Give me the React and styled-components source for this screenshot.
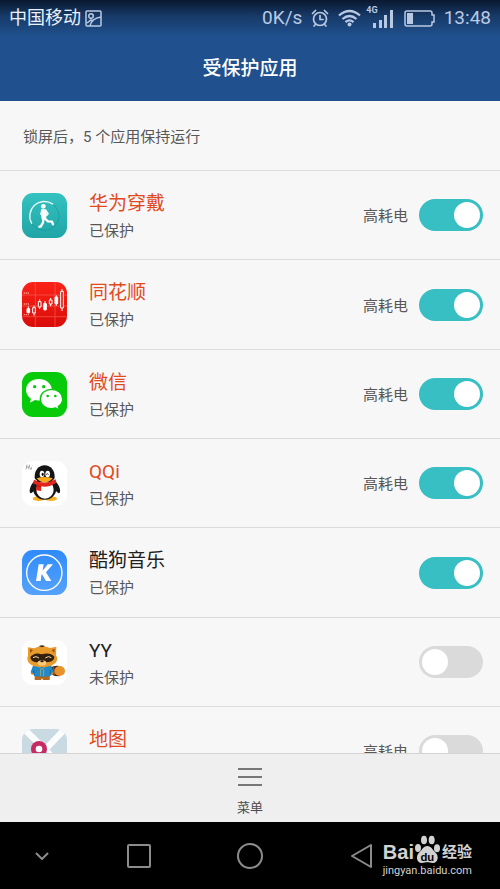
import React, { useState } from "react";
import styled, { createGlobalStyle } from "styled-components";

const GlobalStyle = createGlobalStyle`
  *, *::before { box-sizing: border-box; }
  body {
    margin: 0;
    background: #000;
    font-family: Roboto, "Noto Sans CJK SC", sans-serif;
  }
  button { font: inherit; border: 0; padding: 0; background: none; cursor: pointer; }
`;

const Screen = styled.div`
  display: flex;
  flex-direction: column;
  height: 100vh;
  background: #f7f7f7;
  overflow: hidden;
`;

const Header = styled.header`
  flex: none;
  color: #fff;
  background: linear-gradient(#0a1830 0, #173a68 16px, #20508d 36px);
`;

const StatusBar = styled.div`
  display: flex;
  align-items: center;
  height: 36px;
  padding: 0 9px;
  color: #b9c9e2;
  font-size: 19px;
  line-height: 36px;
  svg { display: block; flex: none; }
`;

const Carrier = styled.span`
  flex: 1;
  display: flex;
  align-items: center;
  gap: 4px;
  color: #e9f1fc;
  font-size: 18px;
`;

const StatusIcons = styled.span`
  display: flex;
  align-items: center;
  gap: 9px;
`;

const Title = styled.h1`
  margin: 0;
  height: 65px;
  font-size: 19px;
  font-weight: 500;
  line-height: 66px;
  text-align: center;
`;

const Content = styled.main`
  flex: 1;
  min-height: 0;
  overflow-y: auto;
  scrollbar-width: none;
`;

const Summary = styled.p`
  margin: 0;
  padding: 0 23px;
  height: 69px;
  color: #585858;
  font-size: 15px;
  line-height: 72px;
`;

const AppList = styled.ul`
  margin: 0;
  padding: 0;
  list-style: none;
`;

const AppRow = styled.li`
  display: flex;
  align-items: center;
  height: 89px;
  padding: 0 17px 0 22px;
  border-top: 1px solid #dcdcdc;
  &:nth-child(3n + 2) { height: 90px; }
`;

const AppIcon = styled.svg`
  flex: none;
  width: 45px;
  height: 45px;
  border-radius: 11px;
`;

const AppText = styled.label`
  flex: 1;
  margin-left: 22px;
  padding-top: 3px;
`;

const AppName = styled.span`
  display: block;
  color: ${(p) => (p.$alert ? "#e24a1e" : "#202020")};
  font-size: 19px;
  line-height: 28px;
`;

const AppState = styled.span`
  display: block;
  color: #585858;
  font-size: 15px;
  line-height: 26px;
`;

const PowerTag = styled.span`
  margin-right: 11px;
  padding-top: 2px;
  color: #585858;
  font-size: 15px;
  line-height: 26px;
`;

const Switch = styled.input`
  appearance: none;
  flex: none;
  display: flex;
  justify-content: ${(p) => (p.checked ? "flex-end" : "flex-start")};
  width: 64px;
  height: 32px;
  margin: 0;
  padding: 3px;
  border-radius: 16px;
  background: ${(p) => (p.checked ? "#37bfc3" : "#dadada")};
  cursor: pointer;
  &::before {
    content: "";
    width: 26px;
    height: 26px;
    border-radius: 50%;
    background: #fff;
  }
`;

const Toolbar = styled.footer`
  flex: none;
  display: flex;
  justify-content: center;
  height: 69px;
  border-top: 1px solid #d4d4d4;
  background: #efefef;
`;

const MenuButton = styled.button`
  display: flex;
  flex-direction: column;
  align-items: center;
  padding-top: 13px;
  color: #4c4c4c;
  font-size: 13px;
  line-height: 20px;
  svg { display: block; margin-bottom: 11px; }
`;

const NavBar = styled.nav`
  flex: none;
  position: relative;
  display: grid;
  grid-template-columns: 83px 1fr 1fr 1fr 83px;
  align-items: center;
  justify-items: center;
  height: 67px;
  background: #000;
  svg { display: block; }
`;

const Watermark = styled.div`
  position: absolute;
  right: 28px;
  bottom: 10px;
  display: flex;
  flex-direction: column;
  align-items: flex-end;
  color: #d2d2d2;
  font-family: "Liberation Sans", "Noto Sans CJK SC", sans-serif;
`;

const Brand = styled.div`
  display: flex;
  align-items: flex-end;
  height: 28px;
  font-size: 20px;
  font-weight: 700;
  line-height: 22px;
`;

const BrandSuffix = styled.span`
  margin-left: 1px;
  font-size: 15px;
  line-height: 22px;
`;

const Site = styled.div`
  font-family: Roboto, sans-serif;
  font-size: 11px;
  line-height: 16px;
`;

const RunnerIcon = () => (
  <AppIcon viewBox="66 37 135 135" aria-hidden="true">
    <defs>
      <linearGradient id="teal" x2="0" y2="1">
        <stop stopColor="#34c2c1" />
        <stop offset="1" stopColor="#20a5a6" />
      </linearGradient>
      <linearGradient id="ring" x2="1" y2="0.6">
        <stop stopColor="#d8f6f4" />
        <stop offset="1" stopColor="#fff" />
      </linearGradient>
    </defs>
    <rect x="66" y="37" width="135" height="135" fill="url(#teal)" />
    <circle cx="133" cy="106" r="44" fill="none" stroke="#168f91" strokeWidth="3" opacity="0.5" />
    <path d="M95 128A44 44 0 0 1 158 70" fill="none" stroke="url(#ring)" strokeWidth="4" strokeLinecap="round" />
    <circle cx="130" cy="77" r="7" fill="#fff" />
    <path d="M124 86h13l3 12-2 18H125l-2-15z" fill="#fff" />
    <g fill="none" stroke="#fff" strokeLinecap="round" strokeLinejoin="round">
      <path d="M126 88l-3 12 8 6M137 89l7 10-4 5" strokeWidth="5" />
      <path d="M134 113l10 9 12 1 3 8M130 114l-1 12-7 12h-4" strokeWidth="7" />
    </g>
  </AppIcon>
);

const CandleIcon = () => (
  <AppIcon viewBox="66 305 135 135" aria-hidden="true">
    <defs>
      <linearGradient id="red" x2="0" y2="1">
        <stop stopColor="#fb2418" />
        <stop offset="1" stopColor="#d90d0b" />
      </linearGradient>
    </defs>
    <rect x="66" y="305" width="135" height="135" fill="url(#red)" />
    <path d="M66 344H201M66 409H201M106 305V440M165 305V440M66 377H201" stroke="#ff7466" strokeWidth="2" opacity="0.75" />
    <path d="M71 338h17M71 371h17M71 403h17" stroke="#ff9487" strokeWidth="4" strokeDasharray="4 2" />
    <g stroke="#fff" strokeWidth="3">
      <path d="M85 378V399M102 376V406M119 357V386M135 362V391M152 353V378M169 345V376M186 326V392" />
      <path d="M81 385h8v12h-8zM131 370h8v18h-8zM165 350h8v20h-8z" fill="#fff" />
      <path d="M98 382h8v16h-8zM115 364h8v16h-8zM148 359h8v12h-8zM182 333h8v50h-8z" fill="#e01a12" />
    </g>
  </AppIcon>
);

const WeChatIcon = () => (
  <AppIcon viewBox="66 33 135 135" aria-hidden="true">
    <rect x="66" y="33" width="135" height="135" fill="#07ca0b" />
    <path d="M117 54c-22 0-39 14-39 33 0 11 6 20 15 26l-3 12 15-8c41 8 52-15 51-30-1-19-18-33-39-33z" fill="#fff" />
    <path d="M155 85c-19 0-34 12-34 29s15 29 34 29c4 0 8-1 12-2l11 6-3-11c8-5 13-13 13-22 0-17-15-29-33-29z" fill="#fff" stroke="#07ca0b" strokeWidth="4" />
    <g fill="#07ca0b">
      <circle cx="104" cy="77" r="5" />
      <circle cx="131" cy="77" r="5" />
      <circle cx="143" cy="105" r="4" />
      <circle cx="166" cy="105" r="4" />
    </g>
  </AppIcon>
);

const PenguinIcon = () => (
  <AppIcon viewBox="66 302 135 135" aria-hidden="true">
    <rect x="66" y="302" width="135" height="135" fill="#fff" />
    <path d="M81 313l-3 14M89 313l-3 14M79 320h9M94 320l-2 7 4-2M97 315v1" fill="none" stroke="#777" strokeWidth="2" />
    <ellipse cx="116" cy="415" rx="18" ry="7" fill="#f3ae23" />
    <ellipse cx="153" cy="415" rx="18" ry="7" fill="#f3ae23" />
    <path d="M106 359C87 377 86 399 93 399q5-2 10-10zM162 359c21 18 22 40 14 40q-5-2-10-10z" fill="#151515" />
    <ellipse cx="134" cy="385" rx="35" ry="33" fill="#151515" />
    <ellipse cx="135" cy="388" rx="26" ry="27" fill="#fff" />
    <path d="M104 352c-1-22 12-37 30-37s31 15 30 37c-2 17-58 17-60 0z" fill="#151515" />
    <ellipse cx="126" cy="341" rx="7" ry="10" fill="#fff" />
    <ellipse cx="143" cy="341" rx="7" ry="10" fill="#fff" />
    <ellipse cx="128" cy="342" rx="3" ry="5" />
    <path d="M139 343q3-6 6 0" fill="none" stroke="#111" strokeWidth="3" />
    <path d="M102 358q31 18 65-1l2 10q-24 16-45 11l-1 14-15-2 2-16-11-5z" fill="#e2241b" />
    <path d="M110 354q24-8 48 0-9 12-24 12t-24-12z" fill="#f5a91b" />
    <path d="M111 376l12 3" stroke="#9e120e" strokeWidth="2" />
  </AppIcon>
);

const KugouIcon = () => (
  <AppIcon viewBox="66 29 135 135" aria-hidden="true">
    <defs>
      <linearGradient id="sky" x2="0" y2="1">
        <stop stopColor="#2f8bfa" />
        <stop offset="1" stopColor="#55a2fb" />
      </linearGradient>
    </defs>
    <rect x="66" y="29" width="135" height="135" fill="url(#sky)" />
    <circle cx="133" cy="97" r="53" fill="none" stroke="#fff" strokeWidth="4" />
    <path d="M116 72h15l-3 19 15-19h16l-21 24 16 26h-16l-13-22-3 22h-14z" fill="#fff" />
  </AppIcon>
);

const RaccoonIcon = () => (
  <AppIcon viewBox="66 298 135 135" aria-hidden="true">
    <rect x="66" y="298" width="135" height="135" fill="#fff" />
    <path d="M149 382q12-8 26-7l4 32q-17 0-29-8z" fill="#3b2414" />
    <path d="M161 379l2 24" stroke="#a86a24" strokeWidth="3" />
    <ellipse cx="179" cy="391" rx="16" ry="15" fill="#e8922b" />
    <path d="M104 399h46l-1 19h-20l-3-5-3 5h-19z" fill="#b46a1e" />
    <circle cx="97" cy="397" r="5" fill="#d98a2b" />
    <circle cx="156" cy="397" r="5" fill="#d98a2b" />
    <path d="M100 372h53l8 22-9 5v7q-26 5-50 0v-7l-10-5z" fill="#2288c6" />
    <path d="M102 388v16M151 388v16" stroke="#125885" strokeWidth="2" />
    <path d="M114 376l12 10 12-10M122 386v20M131 386v20" fill="none" stroke="#d9b350" strokeWidth="2" />
    <path d="M84 320l18 3q26-12 48-1l19-4-1 26q8 12-1 22-16 14-41 13-27 1-39-12-8-12-3-22z" fill="#e99b2c" />
    <path d="M90 325l9 3-8 9zM164 324l-9 4 8 9z" fill="#8f5118" />
    <path d="M116 317q10-7 19 0-8 5-19 0z" fill="#4a2b15" />
    <path d="M91 349q13-16 34-8 25-8 38 7 0 13-17 16-20 3-22-6-6 9-20 6-12-3-13-15z" fill="#33200f" />
    <path d="M99 351q9-7 18 1M136 352q9-8 18-1" fill="none" stroke="#f7ddb0" strokeWidth="3" />
    <ellipse cx="126" cy="367" rx="13" ry="8" fill="#f8ca78" />
    <ellipse cx="126" cy="362" rx="5" ry="3" fill="#271409" />
  </AppIcon>
);

const MapIcon = () => (
  <AppIcon viewBox="66 564 135 135" aria-hidden="true">
    <rect x="66" y="564" width="135" height="135" fill="#c9dae2" />
    <path d="M68 560L140 630 L201 699M198 560L66 699" fill="none" stroke="#fbfcfc" strokeWidth="19" />
    <path d="M117 600a24 24 0 0 1 24 24c0 18-24 42-24 42s-24-24-24-42a24 24 0 0 1 24-24z" fill="#c62b63" />
    <circle cx="117" cy="624" r="10" fill="#fff" />
  </AppIcon>
);

const apps = [
  { id: "wear", name: "华为穿戴", Icon: RunnerIcon, alert: true, power: true, on: true },
  { id: "ths", name: "同花顺", Icon: CandleIcon, alert: true, power: true, on: true },
  { id: "wechat", name: "微信", Icon: WeChatIcon, alert: true, power: true, on: true },
  { id: "qqi", name: "QQi", Icon: PenguinIcon, alert: true, power: true, on: true },
  { id: "kugou", name: "酷狗音乐", Icon: KugouIcon, alert: false, power: false, on: true },
  { id: "yy", name: "YY", Icon: RaccoonIcon, alert: false, power: false, on: false },
  { id: "map", name: "地图", Icon: MapIcon, alert: true, power: true, on: false },
];

const PictureGlyph = () => (
  <svg width="17" height="17" viewBox="0 0 17 17" fill="none" stroke="#b9c9e2" strokeWidth="1.5" aria-hidden="true">
    <rect x="1" y="1" width="15" height="15" rx="1" />
    <circle cx="6" cy="6" r="2.3" />
    <path d="M2 13l4-3 2 1M5 16c1-6 5-8 11-9" />
  </svg>
);

const AlarmGlyph = () => (
  <svg width="18" height="18" viewBox="0 0 18 18" fill="none" stroke="#b9c9e2" strokeWidth="1.7" strokeLinecap="round" aria-hidden="true">
    <circle cx="9" cy="10" r="6.5" />
    <path d="M9 6.5V10.5H12M1.5 4.5L4.5 1.5M16.5 4.5L13.5 1.5M4.5 15.5L3 17M13.5 15.5L15 17" />
  </svg>
);

const WifiGlyph = () => (
  <svg width="23" height="18" viewBox="0 0 23 18" fill="none" stroke="#b9c9e2" strokeWidth="2.3" aria-hidden="true">
    <path d="M1 6.5Q11.5-2.5 22 6.5M4.500 10Q11.500 4 18.500 10M7.500 13.200Q11.500 9.600 15.500 13.200" />
    <circle cx="11.5" cy="15.5" r="2" fill="#b9c9e2" stroke="none" />
  </svg>
);

const Signal = styled.span`
  display: flex;
  align-items: flex-start;
  height: 24px;
  margin: 0 2px 0 -4px;
  font-size: 9px;
  font-weight: 700;
  line-height: 9px;
  svg { margin: 4px 0 0 -5px; }
`;

const SignalGlyph = () => (
  <svg width="20" height="18" viewBox="0 0 20 18" fill="#b9c9e2" aria-hidden="true">
    <path d="M0 13h3v5H0zM6 10h3v8H6zM11 5h3v13h-3zM17 0h3v18h-3z" />
  </svg>
);

const BatteryGlyph = () => (
  <svg width="31" height="17" viewBox="0 0 31 17" fill="none" stroke="#b9c9e2" strokeWidth="1.5" aria-hidden="true">
    <path d="M3 1H26Q28 1 28 3V5H30V12H28V14Q28 16 26 16H3Q1 16 1 14V3Q1 1 3 1Z" />
    <path d="M3 3h6v11H3z" fill="#b9c9e2" stroke="none" />
  </svg>
);

const PawGlyph = () => (
  <svg width="27" height="28" viewBox="222 46 81 84" fill="#d2d2d2" aria-hidden="true">
    <ellipse cx="234" cy="85" rx="9" ry="12" />
    <ellipse cx="252" cy="61" rx="9" ry="13" />
    <ellipse cx="275" cy="61" rx="9" ry="13" />
    <ellipse cx="291" cy="86" rx="9" ry="12" />
    <path d="M262 79c13 0 15 12 25 20 10 9 8 30-8 31-8 0-11-2-17-2s-9 2-17 2c-16-1-18-22-8-31 10-8 12-20 25-20z" />
    <text x="262" y="123" textAnchor="middle" fontSize="34" fontWeight="700" fill="#000">du</text>
  </svg>
);

export default function App() {
  const [enabled, setEnabled] = useState(() => Object.fromEntries(apps.map((a) => [a.id, a.on])));
  const toggle = (id) => setEnabled((s) => ({ ...s, [id]: !s[id] }));
  const count = Object.values(enabled).filter(Boolean).length;

  return (
    <>
      <GlobalStyle />
      <Screen>
        <Header>
          <StatusBar>
            <Carrier>中国移动<PictureGlyph /></Carrier>
            <StatusIcons>
              <span>0K/s</span>
              <AlarmGlyph />
              <WifiGlyph />
              <Signal>4G<SignalGlyph /></Signal>
              <BatteryGlyph />
              <span>13:48</span>
            </StatusIcons>
          </StatusBar>
          <Title>受保护应用</Title>
        </Header>
        <Content>
          <Summary>锁屏后，{count} 个应用保持运行</Summary>
          <AppList>
            {apps.map(({ id, name, Icon, alert, power }) => (
              <AppRow key={id}>
                <Icon />
                <AppText htmlFor={id}>
                  <AppName $alert={alert}>{name}</AppName>
                  <AppState>{enabled[id] ? "已保护" : "未保护"}</AppState>
                </AppText>
                {power && <PowerTag>高耗电</PowerTag>}
                <Switch id={id} type="checkbox" checked={enabled[id]} onChange={() => toggle(id)} />
              </AppRow>
            ))}
          </AppList>
        </Content>
        <Toolbar>
          <MenuButton type="button">
            <svg width="24" height="20" viewBox="0 0 24 20" stroke="#777" strokeWidth="2" aria-hidden="true">
              <path d="M0 2H24M0 10H24M0 18H24" />
            </svg>
            菜单
          </MenuButton>
        </Toolbar>
        <NavBar>
          <button type="button" aria-label="收起">
            <svg width="14" height="8" viewBox="0 0 14 8" fill="none" stroke="#8c8c8c" strokeWidth="2">
              <path d="M1 1l6 6 6-6" />
            </svg>
          </button>
          <button type="button" aria-label="最近任务">
            <svg width="24" height="24" viewBox="0 0 24 24" fill="none" stroke="#8c8c8c" strokeWidth="2">
              <rect x="1" y="1" width="22" height="22" rx="1" />
            </svg>
          </button>
          <button type="button" aria-label="主屏幕">
            <svg width="26" height="26" viewBox="0 0 26 26" fill="none" stroke="#8c8c8c" strokeWidth="2">
              <circle cx="13" cy="13" r="12" />
            </svg>
          </button>
          <button type="button" aria-label="返回">
            <svg width="23" height="26" viewBox="0 0 23 26" fill="none" stroke="#8c8c8c" strokeWidth="2" strokeLinejoin="round">
              <path d="M21 2V24L2 13Z" />
            </svg>
          </button>
          <Watermark>
            <Brand>Bai<PawGlyph /><BrandSuffix>经验</BrandSuffix></Brand>
            <Site>jingyan.baidu.com</Site>
          </Watermark>
        </NavBar>
      </Screen>
    </>
  );
}
